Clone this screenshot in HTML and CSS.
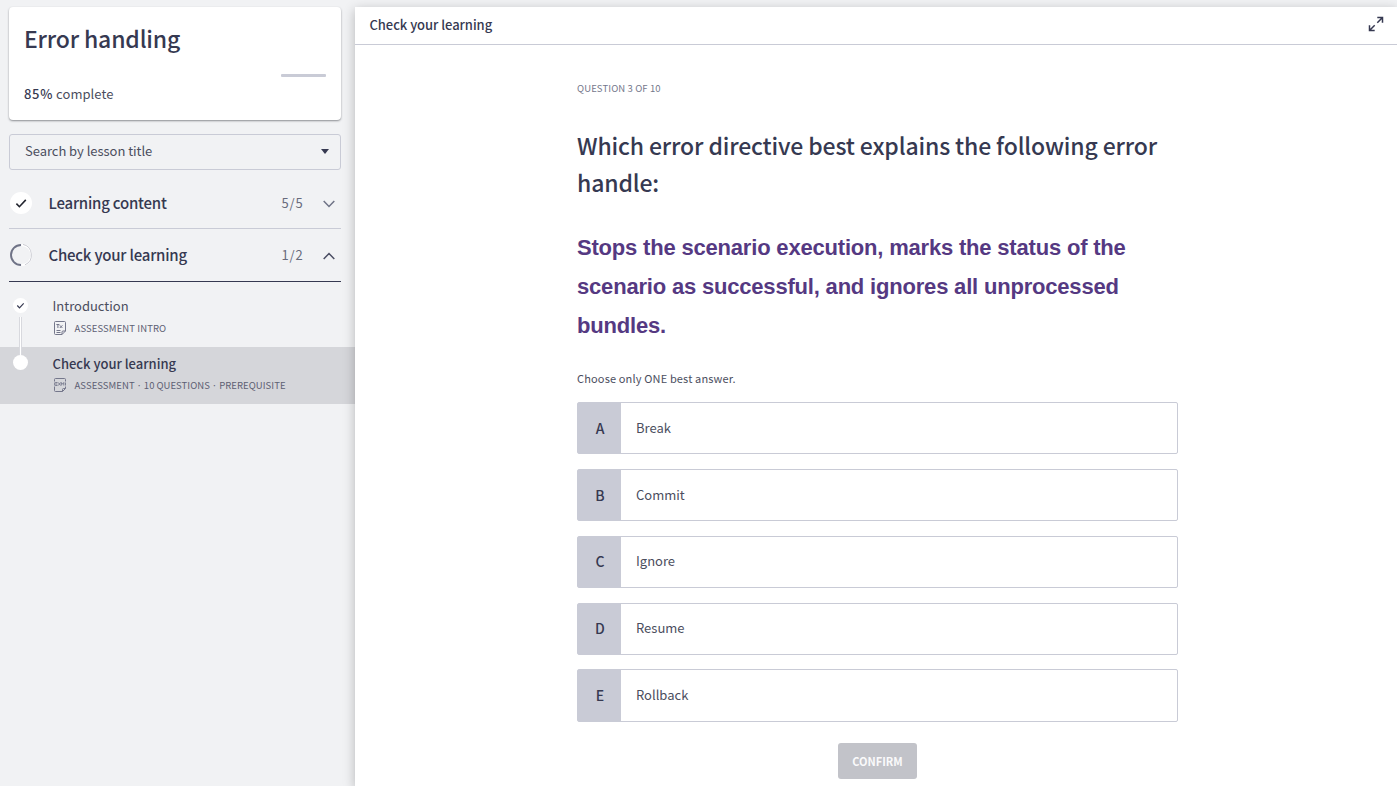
FILE: index.html
```html
<!DOCTYPE html>
<html lang="en">
<head>
<meta charset="utf-8">
<title>Error handling</title>
<link rel="stylesheet" href="styles.css">
</head>
<body>
<div class="app">
  <aside class="sidebar">
    <section class="course">
      <h1 class="course-title"><span>Error handling</span></h1>
      <div class="progress"><div class="progress-rest"></div></div>
      <p class="course-status"><span><b>85%</b> complete</span></p>
    </section>
    <div class="search">
      <span>Search by lesson title</span>
      <svg class="caret" width="8" height="5" viewBox="0 0 8 5"><path d="M0 0h8L4 5z" fill="#363951"/></svg>
    </div>
    <div class="section">
      <svg class="state" width="22" height="22" viewBox="0 0 22 22"><circle cx="11" cy="11" r="11" fill="#fff"/><path d="M6.400 11.600l3 3.100 6.400-6.800" fill="none" stroke="#23252f" stroke-width="1.600"/></svg>
      <span class="section-name">Learning content</span>
      <span class="count">5/5</span>
      <svg class="chevron" width="12" height="8" viewBox="0 0 12 8"><path d="M.7 1L6 6.500 11.300 1" fill="none" stroke="#6f7386" stroke-width="1.500"/></svg>
    </div>
    <div class="section section-open">
      <svg class="state" width="22" height="22" viewBox="0 0 22 22"><path d="M11.500 1a10 10 0 0 1 0 20" fill="none" stroke="#fff" stroke-width="1.800"/><path d="M13 .4a10.800 10.800 0 0 1 2 20.400" fill="none" stroke="#a9abb7" stroke-width=".6"/><path d="M11 1a10 10 0 0 0 0 20" fill="none" stroke="#6f7386" stroke-width="1.900"/></svg>
      <span class="section-name">Check your learning</span>
      <span class="count">1/2</span>
      <svg class="chevron" width="12" height="8" viewBox="0 0 12 8"><path d="M.7 7L6 1.500 11.300 7" fill="none" stroke="#4b4e63" stroke-width="1.500"/></svg>
    </div>
    <div class="lessons">
      <div class="lesson">
        <div class="track"><svg width="15" height="15" viewBox="0 0 15 15"><circle cx="7.500" cy="7.500" r="7.500" fill="#fff"/><path d="M4.300 7.500l2.200 2.300 4.200-4.400" fill="none" stroke="#363951" stroke-width="1.200"/></svg><i class="rail"></i></div>
        <div class="lesson-body">
          <div class="lesson-name"><span>Introduction</span></div>
          <div class="meta meta-intro">
            <svg width="12" height="14" viewBox="0 0 12 14" fill="none" stroke="#74778b" stroke-width="1"><path d="M1.500.5h9q1 0 1 1v8.500l-3.500 3.500h-6.500q-1 0-1-1v-11q0-1 1-1z"/><path d="M11.500 10H9q-1 0-1 1v2.500M2.400 3.500h3M3.900 3.500v3.500M5.800 4.300l2.600 2.700M8.400 4.300L5.800 7M2.500 9.500h4M2.500 11.500h4"/></svg>
            <span>ASSESSMENT INTRO</span>
          </div>
        </div>
      </div>
      <div class="lesson lesson-current">
        <div class="track"><i class="dot"></i></div>
        <div class="lesson-body">
          <div class="lesson-name"><span>Check your learning</span></div>
          <div class="meta meta-long">
            <svg width="12" height="14" viewBox="0 0 12 14" fill="none" stroke="#74778b" stroke-width="1"><path d="M.5 3.500v-2q0-1 1-1h9q1 0 1 1v2M11.500 8.500v2l-3 3h-7q-1 0-1-1v-4M11.500 10.500H9.500q-1 0-1 1v2"/><path d="M3.500 4.500H1.300Q.5 4.500.5 5.300v1.400q0 .8.800.8h2.200M.8 6h2.500M4.300 4.500l2.200 3M6.500 4.500l-2.200 3M7.300 7.500v-3l1.200 1.700 1.300-1.700v3M11.500 4.500v3" stroke-width=".9"/></svg>
            <span>ASSESSMENT · 10 QUESTIONS · PREREQUISITE</span>
          </div>
        </div>
      </div>
    </div>
  </aside>
  <main class="panel">
    <header class="bar">
      <span class="bar-title">Check your learning</span>
      <svg width="16" height="16" viewBox="0 0 16 16" fill="none" stroke="#363951" stroke-width="1.500"><path d="M9.300 1.500h5.200v5.200M14.500 1.500L9.300 6.700M6.700 14.500H1.500V9.300M1.500 14.500l5.200-5.200"/></svg>
    </header>
    <div class="question">
      <p class="counter"><span>QUESTION 3 OF 10</span></p>
      <h2 class="prompt"><span>Which error directive best explains the following error</span><br>handle:</h2>
      <h3 class="statement"><span>Stops the scenario execution, marks the status of the</span><br>scenario as successful, and ignores all unprocessed<br>bundles.</h3>
      <p class="hint"><span>Choose only ONE best answer.</span></p>
      <div class="answers">
        <div class="answer"><b class="letter">A</b><span>Break</span></div>
        <div class="answer"><b class="letter">B</b><span>Commit</span></div>
        <div class="answer"><b class="letter">C</b><span>Ignore</span></div>
        <div class="answer"><b class="letter">D</b><span>Resume</span></div>
        <div class="answer"><b class="letter">E</b><span>Rollback</span></div>
      </div>
      <button class="confirm"><span>CONFIRM</span></button>
    </div>
  </main>
</div>
</body>
</html>
```
FILE: styles.css
```css
* { box-sizing: border-box; }
body { margin: 0; height: 786px; overflow: hidden; background: #f1f2f4; color: #363951; font-family: "Noto Sans CJK JP", "Noto Sans", sans-serif; font-size: 13px; }
h1, h2, h3, p { margin: 0; }
svg { flex: none; display: block; }
.app { display: flex; height: 786px; padding-top: 7px; }
.sidebar { width: 355px; flex: none; }
.course { width: 332px; height: 113px; margin-left: 9px; padding: 13px 15px 0; background: #fff; border-radius: 4px; box-shadow: 0 1px 2px rgba(40, 42, 50, .5); }
.course-title { font-size: 23px; font-weight: 500; line-height: 36px; letter-spacing: -.18px; }
.progress { display: flex; justify-content: flex-end; padding-top: 18px; }
.progress-rest { width: 45px; height: 3px; background: #c9cbd6; border-radius: 1px; }
.course-status { margin-top: 6px; font-size: 13px; line-height: 22px; letter-spacing: .05px; color: #4b4e5e; }
.course-status b { font-weight: 500; letter-spacing: .7px; color: #363951; }
.search { display: flex; justify-content: space-between; align-items: center; width: 332px; height: 36px; margin: 14px 0 0 9px; padding: 0 11px 1px 15px; border: 1px solid #c9cbd6; border-radius: 3px; letter-spacing: -.04px; color: #4b4e5e; }
.search span { padding-bottom: 2px; }
.section { display: flex; align-items: center; width: 332px; height: 53px; margin-left: 9px; padding-left: 1px; border-bottom: 1px solid #c9cbd6; }
.search + .section { height: 59px; padding-top: 8px; }
.section-open { border-color: #363951; }
.section-name { margin-left: 16.500px; padding-bottom: 1px; font-size: 15px; font-weight: 500; letter-spacing: -.22px; flex: 1; }
.count { padding-bottom: 1px; font-size: 13px; letter-spacing: .8px; color: #686b7c; }
.chevron { margin: 1px 6px 0 19.500px; }
.lesson { display: flex; height: 57px; padding-left: 12px; }
.lessons { padding-top: 8px; }
.lesson-current { background: #d5d6da; }
.track { width: 16px; display: flex; flex-direction: column; align-items: center; padding-top: 8px; }
.rail { width: 3px; flex: 1; margin: 4px 0 -8px; background: #fff; border: solid #d8d9de; border-width: 0 1px; }
.lesson:first-child { position: relative; }
.dot { width: 15px; height: 15px; border-radius: 50%; background: #fff; }
.lesson-body { margin-left: 24.500px; padding-top: 6px; }
.lesson-name { font-size: 13px; line-height: 20px; color: #4b4e5e; }
.lesson-current .lesson-body { padding-top: 7px; }
.lesson-current .lesson-name { font-weight: 500; color: #363951; }
.meta { display: flex; align-items: center; gap: 9px; margin: 3px 0 0; padding-left: 1px; height: 16px; font-size: 9.500px; color: #5d6073; }
.meta-intro { margin-top: 4px; letter-spacing: .1px; }
.meta-long { letter-spacing: .06px; word-spacing: -.3px; }
.panel { flex: 1; background: #fff; box-shadow: 0 3px 11px rgba(0, 0, 0, .25); }
.bar { display: flex; align-items: center; justify-content: space-between; height: 38px; padding: 0 13px 3px 14.500px; border-bottom: 1px solid #c9cbd6; }
.bar-title { font-size: 13px; font-weight: 500; letter-spacing: -.05px; line-height: 19px; }
.question { display: flex; flex-direction: column; width: 601px; margin: 35px 0 0 222px; }
.counter { font-size: 9.500px; line-height: 16px; letter-spacing: .12px; color: #74778b; }
.prompt { margin-top: 31px; font-size: 23px; font-weight: 500; line-height: 37px; letter-spacing: -.145px; white-space: nowrap; }
.statement { margin-top: 27px; font: bold 22px/39px "Liberation Sans", Arial, sans-serif; letter-spacing: -.19px; color: #553982; white-space: nowrap; }
.hint { margin-top: 25px; font-size: 11px; line-height: 16px; letter-spacing: .15px; color: #4b4e5e; }
.answers { display: grid; grid-auto-rows: 52.300px; gap: 14.500px; margin-top: 16.200px; }
.answer { display: flex; align-items: center; border: 1px solid #c9cbd6; border-radius: 2px; color: #4b4e5e; font-size: 13px; }
.answer span { padding-bottom: 2px; }
.letter { align-self: stretch; display: grid; place-items: center; width: 43px; padding: 0 0 1px 1px; margin-right: 15px; background: #c9cbd6; color: #363951; font-size: 14px; font-weight: 500; }
.confirm { align-self: center; width: 79px; height: 36px; margin-top: 21.300px; padding: 0; border: 0; border-radius: 3px; background: #c2c3c9; color: #fafafb; font: bold 11px "Noto Sans CJK JP", sans-serif; }
```
